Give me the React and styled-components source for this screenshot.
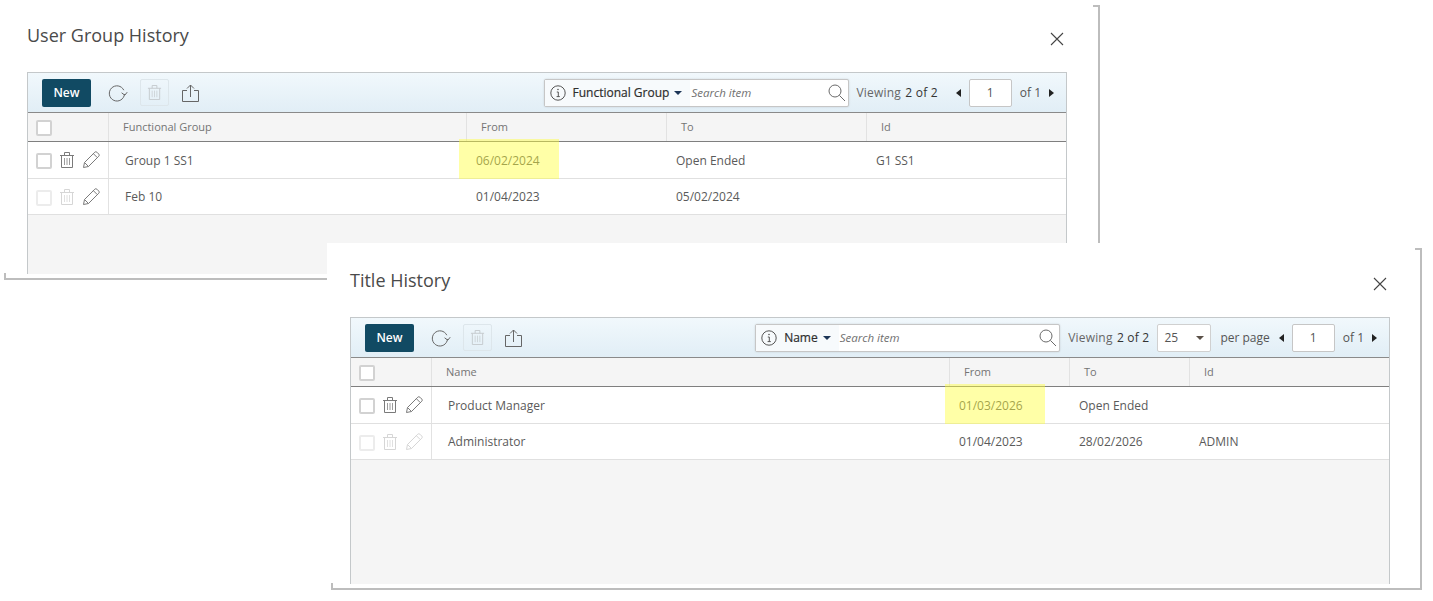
import React from "react";
import styled, { createGlobalStyle } from "styled-components";

const GlobalStyle = createGlobalStyle`
  html, body {
    margin: 0;
    padding: 0;
    background: #fff;
    font-family: "Open Sans", "Liberation Sans", sans-serif;
    color: #555;
  }
`;

const Desktop = styled.div`
  position: relative;
  width: 1433px;
  height: 601px;
  overflow: hidden;
  background: #fff;
`;

const Window = styled.section`
  position: absolute;
  left: ${(p) => p.$left}px;
  top: ${(p) => p.$top}px;
  width: ${(p) => p.$width}px;
  height: ${(p) => p.$height}px;
  box-sizing: border-box;
  padding-left: ${(p) => p.$inset}px;
  padding-bottom: ${(p) => p.$bottom}px;
  display: flex;
  flex-direction: column;
  background: #fff;
`;

const FrameEdge = styled.div`
  position: absolute;
  left: 4px;
  top: ${(p) => p.$top}px;
  right: 0;
  bottom: 0;
  border-right: 2px solid #bdbdbd;
  border-bottom: 2px solid #bdbdbd;
  pointer-events: none;

  &::before {
    content: "";
    position: absolute;
    top: 0;
    right: 0;
    width: 5px;
    height: 2px;
    background: #bdbdbd;
  }

  &::after {
    content: "";
    position: absolute;
    left: 0;
    bottom: 0;
    width: 2px;
    height: 5px;
    background: #bdbdbd;
  }
`;

const Header = styled.header`
  height: ${(p) => p.$height}px;
  width: 1040px;
  flex: none;
  display: flex;
  justify-content: space-between;
  align-items: flex-end;
`;

const Title = styled.h2`
  margin: 0 0 25px;
  font-size: 18px;
  line-height: 24px;
  font-weight: 400;
  color: #4a4a4a;
`;

const CloseButton = styled.button`
  border: 0;
  background: none;
  padding: 0;
  width: 14px;
  height: 14px;
  margin: 0 3px 26px 0;
  color: #444;
  display: block;
`;

const Table = styled.div`
  width: 1040px;
  flex: 1;
  display: flex;
  flex-direction: column;
  box-sizing: border-box;
  border: 1px solid #c4c8ca;
  border-bottom: 0;
  background: #f5f5f5;
`;

const Toolbar = styled.div`
  height: 39px;
  flex: none;
  display: flex;
  align-items: center;
  padding: 0 12px 0 14px;
  background: linear-gradient(#f1f8fc, #e1eef6);
  border-bottom: 1px solid #8a8a8a;
  font-size: 12px;
`;

const NewButton = styled.button`
  width: 49px;
  height: 28px;
  border: 0;
  border-radius: 2px;
  background: #114a63;
  color: #fff;
  font: 600 12px "Open Sans", sans-serif;
  padding: 0;
`;

const ToolIcon = styled.span`
  display: flex;
  align-items: center;
  justify-content: center;
  color: #666;
  margin-left: ${(p) => p.$gap}px;
`;

const DisabledTool = styled.span`
  width: 27px;
  height: 25px;
  margin-left: 12px;
  display: flex;
  align-items: center;
  justify-content: center;
  border: 1px solid #dde6eb;
  border-radius: 2px;
  color: #c4cacd;
`;

const Spacer = styled.div`
  flex: 1;
`;

const SearchBox = styled.div`
  width: 305px;
  height: 28px;
  box-sizing: border-box;
  display: flex;
  align-items: center;
  background: #fff;
  border: 1px solid #c6c6c6;
  border-radius: 2px;
  box-shadow: 0 0 2px rgba(0, 0, 0, 0.15);
  padding-right: 2px;
  color: #555;
`;

const FieldPicker = styled.span`
  display: flex;
  align-items: center;
  height: 100%;
  padding: 0 8px 0 5px;
  background: #f7fafc;
`;

const FieldName = styled.span`
  margin-left: 7px;
  color: #2e2e2e;
  font-size: 12px;
  -webkit-text-stroke: 0.2px #2e2e2e;
  white-space: nowrap;
`;

const Caret = styled.span`
  width: 0;
  height: 0;
  margin-left: 5px;
  border-left: 4px solid transparent;
  border-right: 4px solid transparent;
  border-top: 4px solid ${(p) => p.$color};
`;

const SearchHint = styled.span`
  flex: 1;
  margin-left: 1px;
  font-size: 11.5px;
  font-style: italic;
  color: #707070;
`;

const Viewing = styled.span`
  margin-left: 8px;
  white-space: nowrap;
  letter-spacing: 0.2px;
  color: #666;

  b {
    font-weight: 400;
    color: #333;
    margin-left: 1px;
  }
`;

const PagerText = styled.span`
  margin-left: ${(p) => p.$gap}px;
  white-space: nowrap;
  color: #555;
`;

const Arrow = styled.span`
  width: 0;
  height: 0;
  margin-left: ${(p) => p.$gap}px;
  border-top: 4px solid transparent;
  border-bottom: 4px solid transparent;
  border-${(p) => (p.$dir === "left" ? "right" : "left")}: 5px solid #222;
`;

const PageInput = styled.span`
  width: 43px;
  height: 28px;
  margin-left: 8px;
  box-sizing: border-box;
  display: flex;
  align-items: center;
  justify-content: center;
  background: #fff;
  border: 1px solid #c6c6c6;
  border-radius: 2px;
  color: #555;
`;

const PerPage = styled.span`
  width: 54px;
  height: 28px;
  margin-left: 8px;
  box-sizing: border-box;
  display: flex;
  align-items: center;
  justify-content: space-between;
  padding: 0 6px;
  background: #fff;
  border: 1px solid #d0d0d0;
  border-radius: 2px;
  color: #555;
`;

const Row = styled.div`
  display: grid;
  grid-template-columns: ${(p) => p.$columns};
  flex: none;
  box-sizing: border-box;
  height: ${(p) => p.$height}px;
  background: ${(p) => (p.$head ? "#f5f5f5" : "#fff")};
  border-bottom: 1px solid ${(p) => (p.$head ? "#7f7f7f" : "#e0e0e0")};
  color: ${(p) => (p.$head ? "#747474" : "#5a5a5a")};
  font-size: ${(p) => (p.$head ? "11px" : "12px")};
`;

const Cell = styled.div`
  position: relative;
  display: flex;
  align-items: center;
  box-sizing: border-box;
  padding-left: ${(p) => p.$pad}px;
  padding-bottom: ${(p) => (p.$lift ? 2 : 0)}px;
  border-left: ${(p) => (p.$rule ? "1px solid #e2e2e2" : "0")};
  white-space: nowrap;
`;

const Marked = styled.span`
  position: absolute;
  left: ${(p) => p.$shift}px;
  top: -3px;
  height: 40px;
  width: 100px;
  background: rgba(255, 255, 60, 0.45);
`;

const ActionCell = styled.div`
  display: flex;
  align-items: center;
  padding-left: 8px;
  gap: 7px;
`;

const Check = styled.span`
  width: 16px;
  height: 16px;
  margin-top: 2px;
  box-sizing: border-box;
  flex: none;
  background: #fff;
  border: 2px solid ${(p) => (p.$off ? "#ececec" : "#d2d2d2")};
  border-radius: 2px;
`;

const RowIcon = styled.span`
  display: flex;
  color: ${(p) => (p.$off ? "#d6d6d6" : "#7a7a7a")};
`;

const TrashIcon = ({ size = 16 }) => (
  <svg width={size} height={size} viewBox="0 0 16 16" fill="none" stroke="currentColor" strokeWidth="1">
    <path d="M1 3.5h14M5.5 3.5V0.5h5v3M2.5 3.5v12h11v-12" />
    <path d="M5.5 6v7M8 6v7M10.5 6v7" strokeOpacity="0.75" />
  </svg>
);

const PencilIcon = () => (
  <svg width="18" height="18" viewBox="0 0 18 18" fill="none" stroke="currentColor" strokeWidth="1">
    <path d="M1.5 16.5l1-5L12.8 1.2a1.5 1.5 0 0 1 2.1 0l1.9 1.9a1.5 1.5 0 0 1 0 2.1L6.5 15.5zM2.5 11.5l4 4M11.5 2.8l3.7 3.7" />
  </svg>
);

const RefreshIcon = () => (
  <svg width="20" height="18" viewBox="0 0 20 18" fill="none" stroke="currentColor" strokeWidth="1">
    <path d="M15.8 6.2A7.6 7.6 0 1 0 16.5 10" />
    <path d="M13.6 8.8l3.2 2.4 2.4-3" />
  </svg>
);

const ShareIcon = () => (
  <svg width="17" height="18" viewBox="0 0 17 18" fill="none" stroke="currentColor" strokeWidth="1">
    <path d="M5 6.5H0.5v11h16v-11H12M8.5 13V1M5 4.5L8.5 1 12 4.5" />
  </svg>
);

const InfoIcon = () => (
  <svg width="16" height="16" viewBox="0 0 16 16" fill="none" stroke="currentColor" strokeWidth="1" style={{ flex: "none" }}>
    <circle cx="8" cy="8" r="7.2" />
    <path d="M6.8 7h1.5v4.6M6.6 11.6h3.2" />
    <circle cx="8" cy="4.5" r="0.8" fill="currentColor" stroke="none" />
  </svg>
);

const SearchIcon = () => (
  <svg width="18" height="18" viewBox="0 0 18 18" fill="none" stroke="#6a6a6a" strokeWidth="1" style={{ flex: "none" }}>
    <circle cx="7" cy="7" r="6" />
    <path d="M11.4 11.4l5.6 5.6" />
  </svg>
);

const CloseIcon = () => (
  <svg width="14" height="14" viewBox="0 0 14 14" fill="none" stroke="currentColor" strokeWidth="1.1">
    <path d="M1 1l12 12M13 1L1 13" />
  </svg>
);

const HistoryTable = ({ columns, field, heads, rows, perPage, markShift }) => (
  <Table>
    <Toolbar>
      <NewButton>New</NewButton>
      <ToolIcon $gap={17}><RefreshIcon /></ToolIcon>
      <DisabledTool><TrashIcon size={15} /></DisabledTool>
      <ToolIcon $gap={13}><ShareIcon /></ToolIcon>
      <Spacer />
      <SearchBox>
        <FieldPicker>
          <InfoIcon />
          <FieldName>{field}</FieldName>
          <Caret $color="#1d3557" />
        </FieldPicker>
        <SearchHint>Search item</SearchHint>
        <SearchIcon />
      </SearchBox>
      <Viewing>Viewing <b>2 of 2</b></Viewing>
      {perPage ? (
        <>
          <PerPage>25<Caret $color="#5a5048" /></PerPage>
          <PagerText $gap={9}>per page</PagerText>
        </>
      ) : null}
      <Arrow $dir="left" $gap={perPage ? 9 : 18} />
      <PageInput>1</PageInput>
      <PagerText $gap={8}>of 1</PagerText>
      <Arrow $dir="right" $gap={8} />
    </Toolbar>
    <Row $head $columns={columns} $height={29}>
      <ActionCell><Check /></ActionCell>
      {heads.map((h) => (
        <Cell key={h} $pad={14} $rule $lift>{h}</Cell>
      ))}
    </Row>
    {rows.map((r) => (
      <Row key={r.cells[0]} $columns={columns} $height={r.height}>
        <ActionCell>
          <Check $off={r.off} />
          <RowIcon $off={r.off}><TrashIcon /></RowIcon>
          <RowIcon $off={r.offPencil}><PencilIcon /></RowIcon>
        </ActionCell>
        {r.cells.map((c, i) => (
          <Cell key={i} $pad={i === 0 ? 16 : 10} $rule={i === 0}>
            {c}
            {r.mark === i && <Marked $shift={markShift} />}
          </Cell>
        ))}
      </Row>
    ))}
  </Table>
);

const Dialog = ({ title, left, top, width, height, inset, bottom, head, edge, ...table }) => (
  <Window $left={left} $top={top} $width={width} $height={height} $inset={inset} $bottom={bottom}>
    <FrameEdge $top={edge} />
    <Header $height={head}>
      <Title>{title}</Title>
      <CloseButton aria-label="Close"><CloseIcon /></CloseButton>
    </Header>
    <HistoryTable {...table} />
  </Window>
);

export default function App() {
  return (
    <Desktop>
      <GlobalStyle />
      <Dialog
        title="User Group History"
        left={0}
        top={0}
        width={1100}
        height={280}
        inset={27}
        bottom={6}
        head={72}
        edge={5}
        field="Functional Group"
        columns="80px 358px 200px 200px 1fr"
        heads={["Functional Group", "From", "To", "Id"]}
        markShift={-7}
        rows={[
          { height: 37, mark: 1, cells: ["Group 1 SS1", "06/02/2024", "Open Ended", "G1 SS1"] },
          { height: 36, off: true, cells: ["Feb 10", "01/04/2023", "05/02/2024", ""] },
        ]}
      />
      <Dialog
        title="Title History"
        left={327}
        top={243}
        width={1095}
        height={347}
        inset={23}
        bottom={6}
        head={74}
        edge={5}
        field="Name"
        perPage
        columns="80px 518px 120px 120px 1fr"
        heads={["Name", "From", "To", "Id"]}
        markShift={-4}
        rows={[
          { height: 37, mark: 1, cells: ["Product Manager", "01/03/2026", "Open Ended", ""] },
          { height: 36, off: true, offPencil: true, cells: ["Administrator", "01/04/2023", "28/02/2026", "ADMIN"] },
        ]}
      />
    </Desktop>
  );
}
